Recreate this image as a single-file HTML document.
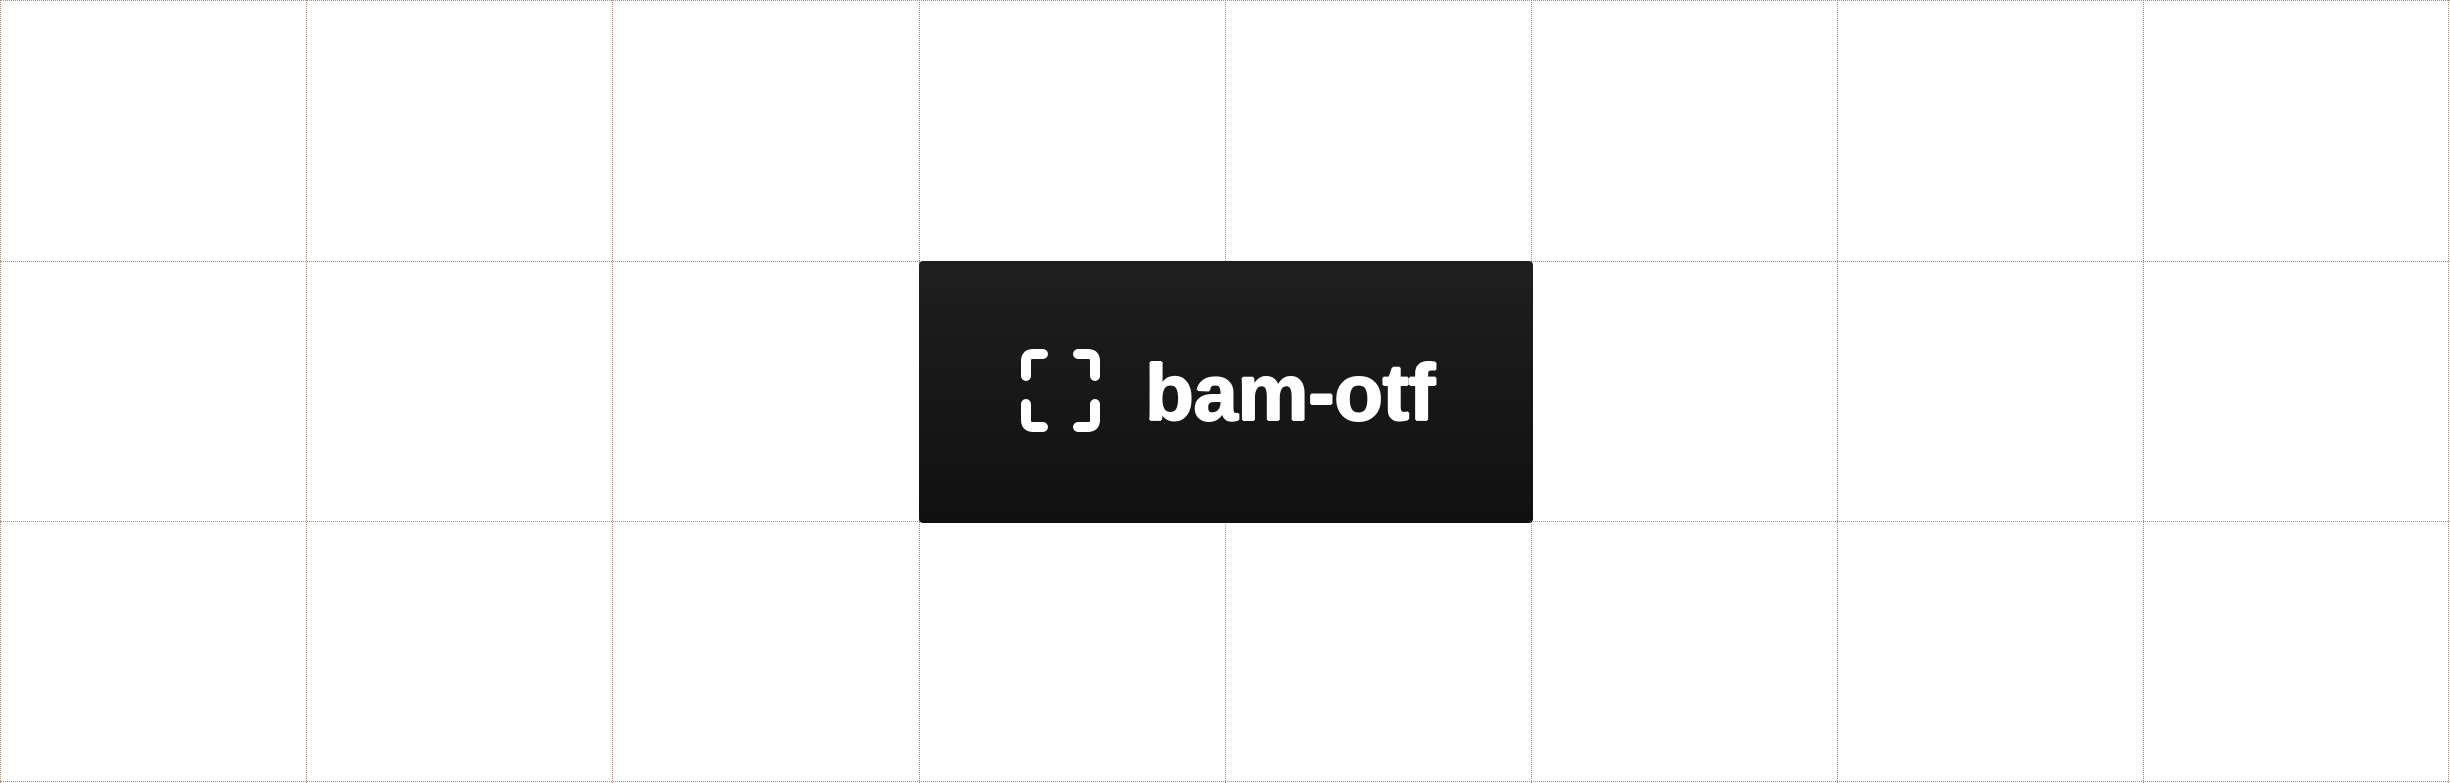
<!DOCTYPE html>
<html><head><meta charset="utf-8">
<style>
html,body{margin:0;padding:0;width:2450px;height:783px;overflow:hidden;background:#fff;}
.v{position:absolute;top:0;height:783px;width:0;border-left:1.5px dotted #a88f7e;}
.h{position:absolute;left:0;width:2450px;height:0;border-top:1.5px dotted #a88f7e;}
.box{position:absolute;left:919px;top:261px;width:614px;height:262px;border-radius:4px;
background:linear-gradient(#1f1f1f,#101010);}
.txt{position:absolute;left:1145px;top:343px;font:bold 80px/100px "Liberation Sans",sans-serif;color:#fff;letter-spacing:-0.5px;white-space:nowrap;
text-shadow:1px 0 0 #fff,-1px 0 0 #fff,0 1px 0 #fff,0 -1px 0 #fff;}
svg{position:absolute;left:1016px;top:344px;}
</style></head><body>
<div class="h" style="top:0"></div>
<div class="h" style="top:261px"></div>
<div class="h" style="top:521px"></div>
<div class="h" style="top:781px"></div>
<div class="v" style="left:0"></div>
<div class="v" style="left:306px"></div>
<div class="v" style="left:612px"></div>
<div class="v" style="left:919px"></div>
<div class="v" style="left:1225px"></div>
<div class="v" style="left:1531px"></div>
<div class="v" style="left:1837px"></div>
<div class="v" style="left:2143px"></div>
<div class="v" style="left:2448px"></div>
<div class="box"></div>
<svg width="96" height="96" viewBox="0 0 96 96" fill="none" stroke="#fff" stroke-width="10" stroke-linecap="round" stroke-linejoin="round">
<path d="M10 32 V17 Q10 10 17 10 H27"/>
<path d="M62 10 H72 Q79 10 79 17 V32"/>
<path d="M10 60 V76 Q10 83 17 83 H27"/>
<path d="M62 83 H72 Q79 83 79 76 V60"/>
</svg>
<div class="txt">bam-otf</div>
</body></html>
